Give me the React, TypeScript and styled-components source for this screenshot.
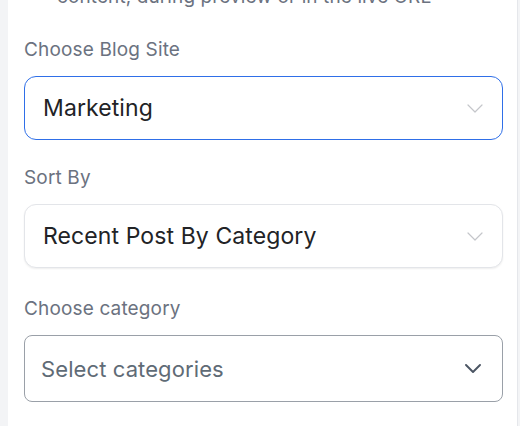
import React from "react";
import styled, { createGlobalStyle } from "styled-components";

const Global = createGlobalStyle`
  html, body { margin: 0; padding: 0; background: #f3f4f6; }
  body { font-family: Inter, "Noto Sans", sans-serif; overflow: hidden; }
`;

const Panel = styled.div`
  margin-left: 8px;
  width: 510px;
  height: 426px;
  background: #ffffff;
  border-right: 1px solid #e5e7eb;
  padding: 0 16px;
  box-sizing: border-box;
  overflow: hidden;
`;

const Intro = styled.p`
  margin: -15px 0 0 33px;
  font-size: 19px;
  line-height: 24px;
  letter-spacing: 0.1px;
  color: #6b7280;
  white-space: nowrap;
`;

const Field = styled.div<{ $top: number }>`
  display: flex;
  flex-direction: column;
  margin-top: ${(p) => p.$top}px;
`;

const Label = styled.label`
  font-size: 19px;
  line-height: 24px;
  letter-spacing: 0.15px;
  color: #6b7280;
  margin-bottom: 14px;
`;

type Variant = "focus" | "soft" | "plain";

const Box = styled.div<{ $variant: Variant }>`
  width: 479px;
  box-sizing: border-box;
  height: ${(p) => (p.$variant === "plain" ? 67 : 64)}px;
  display: flex;
  align-items: center;
  justify-content: space-between;
  padding: 0 ${(p) => (p.$variant === "plain" ? 21 : 19)}px 0 ${(p) => (p.$variant === "plain" ? 16 : 18)}px;
  background: #fff;
  border-radius: ${(p) => (p.$variant === "plain" ? 8 : 12)}px;
  border: 1px solid
    ${(p) =>
      p.$variant === "focus" ? "#2f6fe8" : p.$variant === "soft" ? "#e3e5e9" : "#9aa0a8"};
  box-shadow: ${(p) =>
    p.$variant === "soft" ? "0 1px 2px rgba(0,0,0,0.07)" : "none"};
`;

const Value = styled.span<{ $placeholder?: boolean }>`
  font-size: ${(p) => (p.$placeholder ? 22 : 23)}px;
  color: ${(p) => (p.$placeholder ? "#5f6b76" : "#222326")};
  letter-spacing: 0.1px;
`;

const Chevron = ({ dark }: { dark?: boolean }) => (
  <svg width="16" height="9" viewBox="0 0 16 9" fill="none">
    <path
      d="M1 1 L8 8 L15 1"
      stroke={dark ? "#4b5563" : "#c4c6ca"}
      strokeWidth={dark ? 1.9 : 1.2}
      strokeLinecap="round"
      strokeLinejoin="round"
    />
  </svg>
);

export default function App() {
  return (
    <>
      <Global />
      <Panel>
        <Intro>content, during preview or in the live URL</Intro>
        <Field $top={29}>
          <Label>Choose Blog Site</Label>
          <Box $variant="focus">
            <Value>Marketing</Value>
            <Chevron />
          </Box>
        </Field>
        <Field $top={26}>
          <Label>Sort By</Label>
          <Box $variant="soft">
            <Value>Recent Post By Category</Value>
            <Chevron />
          </Box>
        </Field>
        <Field $top={29}>
          <Label>Choose category</Label>
          <Box $variant="plain">
            <Value $placeholder>Select categories</Value>
            <Chevron dark />
          </Box>
        </Field>
      </Panel>
    </>
  );
}
